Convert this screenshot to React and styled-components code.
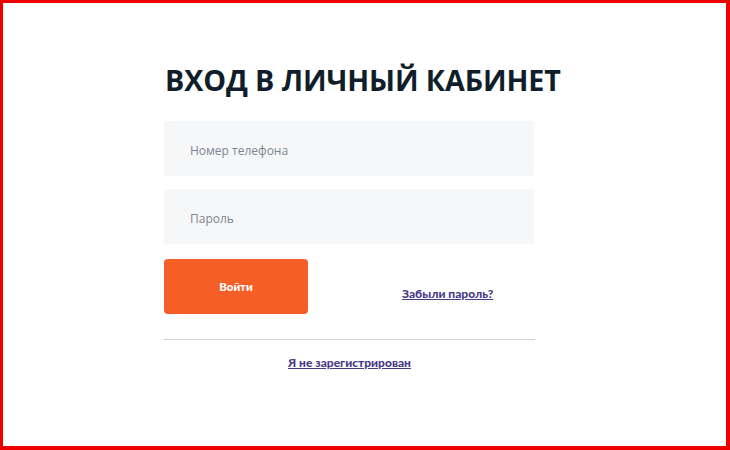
import React from 'react'
import styled, { createGlobalStyle } from 'styled-components';

const Global = createGlobalStyle`
    html, body {
        margin: 0;
        padding: 0;
        background: #fff;
    }
    * {
        box-sizing: border-box;
    }
`;

const Frame = styled.div`
    width: 730px;
    height: 450px;
    border-style: solid;
    border-color: #ee0000;
    border-width: 3px 4px 4px 3px;
    padding: 56px 0 0 161px;
    font-family: Lato, "Liberation Sans", sans-serif;
`;

const Form = styled.div`
    width: 371px;
    display: flex;
    flex-direction: column;
`;

const Title = styled.h1`
    margin: 0 0 20px 1px;
    font-family: "Open Sans", "Liberation Sans", sans-serif;
    font-size: 28.7px;
    line-height: 42px;
    font-weight: 700;
    color: #0f1e2a;
    white-space: nowrap;
    letter-spacing: -0.1px;
`;

const Field = styled.input`
    height: 55px;
    width: 370px;
    border: none;
    outline: none;
    background: #f6f7f9;
    border-radius: 3px;
    padding: 3px 0 0 26px;
    margin-bottom: 13px;
    font-family: "Open Sans", sans-serif;
    font-size: 12px;
    color: #333;
    &::placeholder {
        color: #7d868f;
    }
`;

const Row = styled.div`
    display: flex;
    align-items: center;
    margin-top: 2px;
`;

const Button = styled.button`
    width: 144px;
    height: 55px;
    border: none;
    border-radius: 4px;
    background: #f55f27;
    color: #fff;
    font-family: Lato, sans-serif;
    font-weight: 900;
    font-size: 11.5px;
    padding-bottom: 2px;
`;

const Link = styled.a`
    color: #4b3a88;
    font-family: Lato, sans-serif;
    font-weight: 900;
    font-size: 12px;
    text-decoration: underline;
    margin-left: ${props => props.left || 0}px;
    margin-top: ${props => props.top || 0}px;
    align-self: ${props => props.center ? 'center' : 'auto'};
`;

const Divider = styled.hr`
    width: 371px;
    margin: 25px 0 0 0;
    border: none;
    border-top: 1px solid #cfd1d4;
`;

const App = () => {
    return (
        <>
            <Global />
            <Frame>
                <Form>
                    <Title>ВХОД В ЛИЧНЫЙ КАБИНЕТ</Title>
                    <Field placeholder="Номер телефона" />
                    <Field placeholder="Пароль" type="password" />
                    <Row>
                        <Button>Войти</Button>
                        <Link href="#" left={94} top={14}>Забыли пароль?</Link>
                    </Row>
                    <Divider />
                    <Link href="#" center top={15}>Я не зарегистрирован</Link>
                </Form>
            </Frame>
        </>
    )
}

export default App
